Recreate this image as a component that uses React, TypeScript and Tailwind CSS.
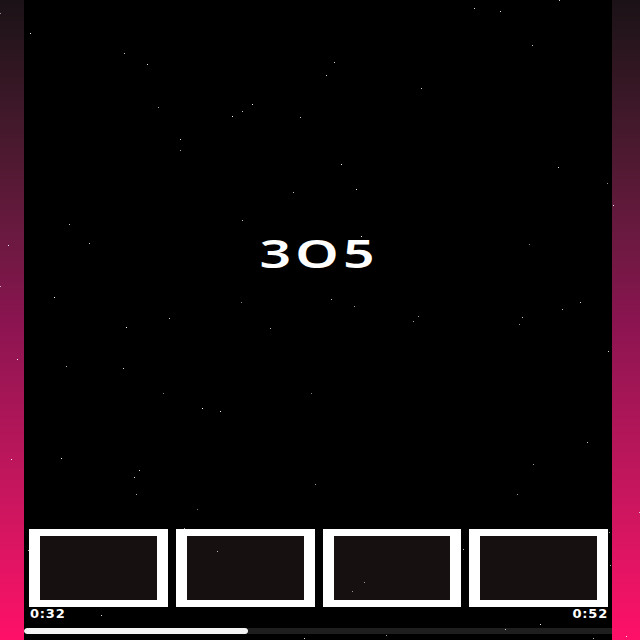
const stars = (() => {
  let seed = 11;
  const rnd = () => {
    seed = (seed * 16807) % 2147483647;
    return seed / 2147483647;
  };
  return Array.from({ length: 80 }, () => ({
    x: Math.floor(rnd() * 640),
    y: Math.floor(rnd() * 640),
    o: 0.5 + rnd() * 0.5,
  }));
})();

const frames = [0, 1, 2, 3];

export default function App() {
  return (
    <div className="relative w-[640px] h-[640px] overflow-hidden bg-black flex">
      {/* Left side glow */}
      <div className="w-[24px] h-full bg-gradient-to-b from-[#1a1216] via-[#8a1450] to-[#ff1068]" />

      {/* Main panel */}
      <div className="flex-1 h-full bg-black flex flex-col">
        <div className="flex-1 flex items-center justify-center pb-[24px] pl-[3px]">
          <span className="inline-block scale-x-[1.38] text-white text-[40px] font-semibold tracking-[3px] font-['Noto_Sans',sans-serif] leading-none">
            3O5
          </span>
        </div>

        {/* Thumbnails */}
        <div className="flex gap-[8px] pl-[5px] pr-[4px]">
          {frames.map((f) => (
            <div key={f} className="flex-1 h-[78px] bg-white px-[11px] py-[7px]">
              <div className="w-full h-full bg-[#161011]" />
            </div>
          ))}
        </div>

        {/* Times */}
        <div className="flex justify-between pl-[6px] pr-[4px] h-[14px] text-white text-[13px] font-bold leading-[14px] tracking-[0.8px] font-['DejaVu_Sans',sans-serif]">
          <span>0:32</span>
          <span>0:52</span>
        </div>

        {/* Progress */}
        <div className="mt-[7px] mb-[6px] h-[6px] flex rounded-l-full overflow-hidden">
          <div className="w-[224px] h-full bg-[#f4f4f4] rounded-full" />
          <div className="flex-1 h-full bg-[#1e1e1e]" />
        </div>
      </div>

      {/* Right side glow */}
      <div className="w-[28px] h-full bg-gradient-to-b from-[#1a1216] via-[#8a1450] to-[#ff1068]" />

      {/* Stars */}
      {stars.map((s, i) => (
        <div
          key={i}
          className="absolute w-[1px] h-[1px] bg-white"
          style={{ left: s.x, top: s.y, opacity: s.o }}
        />
      ))}
    </div>
  );
}
